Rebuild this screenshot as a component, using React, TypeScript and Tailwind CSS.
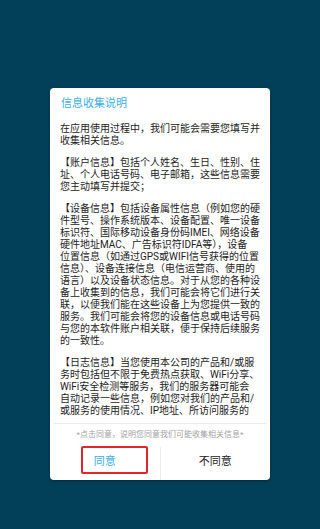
import React from 'react';

const paragraphs: string[][] = [
  ['在应用使用过程中，我们可能会需要您填写并', '收集相关信息。'],
  [
    '【账户信息】包括个人姓名、生日、性别、住',
    '址、个人电话号码、电子邮箱，这些信息需要',
    '您主动填写并提交；',
  ],
  [
    '【设备信息】包括设备属性信息（例如您的硬',
    '件型号、操作系统版本、设备配置、唯一设备',
    '标识符、国际移动设备身份码IMEI、网络设备',
    '硬件地址MAC、广告标识符IDFA等），设备',
    '位置信息（如通过GPS或WIFI信号获得的位置',
    '信息）、设备连接信息（电信运营商、使用的',
    '语言）以及设备状态信息。对于从您的各种设',
    '备上收集到的信息，我们可能会将它们进行关',
    '联，以便我们能在这些设备上为您提供一致的',
    '服务。我们可能会将您的设备信息或电话号码',
    '与您的本软件账户相关联，便于保持后续服务',
    '的一致性。',
  ],
  [
    '【日志信息】当您使用本公司的产品和/或服',
    '务时包括但不限于免费热点获取、WiFi分享、',
    'WiFi安全检测等服务，我们的服务器可能会',
    '自动记录一些信息，例如您对我们的产品和/',
    '或服务的使用情况、IP地址、所访问服务的',
  ],
];

const App: React.FC = () => {
  return (
    <div
      className="w-[320px] h-[529px] bg-[#02405a] flex justify-center pt-[88px]"
      style={{ fontFamily: 'Roboto, "Noto Sans CJK SC", sans-serif' }}
    >
      <div className="w-[220px] h-[392px] bg-white rounded-[4px] shadow-[0_1px_3px_rgba(0,0,0,0.35)] flex flex-col">
        {/* Title */}
        <div className="pt-[9px] px-[11px] text-[11px] leading-[14px] text-[#3aafe3]">信息收集说明</div>

        {/* Scrollable body */}
        <div className="mt-[12px] h-[296px] overflow-hidden px-[10px] flex flex-col gap-[10px] text-[10px] leading-[12px] text-[#1c1c1c]">
          {paragraphs.map((lines, i) => (
            <div key={i}>
              {lines.map((line, j) => (
                <div key={j} className="whitespace-nowrap">{line}</div>
              ))}
            </div>
          ))}
        </div>

        <div className="mt-[4px] mx-[4px] border-t border-[#ececec]"></div>

        {/* Note */}
        <div className="mt-[6px] text-center text-[8px] leading-[10px] text-[#a3a3a3] whitespace-nowrap">
          *点击同意，说明您同意我们可能收集相关信息*
        </div>

        {/* Buttons */}
        <div className="mt-[5px] h-[35px] flex">
          <div className="relative flex-1 flex items-center justify-center text-[11px] text-[#3aafe3]">
            同意
            <div className="absolute left-[31px] top-[1px] w-[67px] h-[28px] border-2 border-[#e5252a] rounded-[2px]"></div>
          </div>
          <div className="w-px mt-[2px] bg-[#ececec]"></div>
          <div className="flex-1 flex items-center justify-center text-[11px] text-[#1c1c1c]">不同意</div>
        </div>
      </div>
    </div>
  );
};

export default App;
